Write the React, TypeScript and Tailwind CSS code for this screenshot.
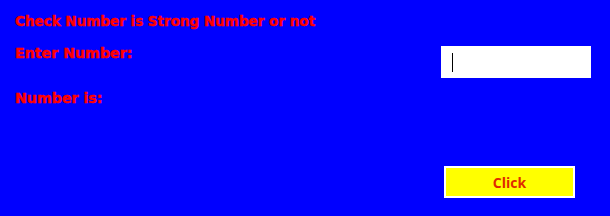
const labelFont = "[font-family:'DejaVu_Sans',sans-serif] font-bold text-[#ff0000] [-webkit-text-stroke:0.5px_#ff0000]"

export default function App() {
  return (
    <div className="w-[610px] h-[216px] bg-[#0000ff] flex flex-col overflow-hidden">
      <div className={`pt-[12px] pl-[15px] text-[13.5px] leading-[18px] ${labelFont}`}>
        Check Number is Strong Number or not
      </div>
      <div className="flex justify-between mt-[16px] pl-[15px] pr-[19px]">
        <div className="flex flex-col">
          <span className={`mt-[-2px] text-[14.2px] leading-[18px] ${labelFont}`}>Enter Number:</span>
          <span className={`mt-[27px] text-[14.2px] leading-[18px] ${labelFont}`}>Number is:</span>
        </div>
        <div className="flex flex-col items-end">
          <div className="w-[150px] h-[32px] bg-white flex items-center pl-[11px]">
            <span className="w-[1px] h-[19px] bg-black" />
          </div>
          <button
            type="button"
            className="mt-[88px] mr-[16px] w-[131px] h-[32px] bg-[#ffff00] border-2 border-white text-[14px] font-bold text-[#e02a00] [font-family:'Open_Sans',sans-serif]"
          >
            Click
          </button>
        </div>
      </div>
    </div>
  )
}
